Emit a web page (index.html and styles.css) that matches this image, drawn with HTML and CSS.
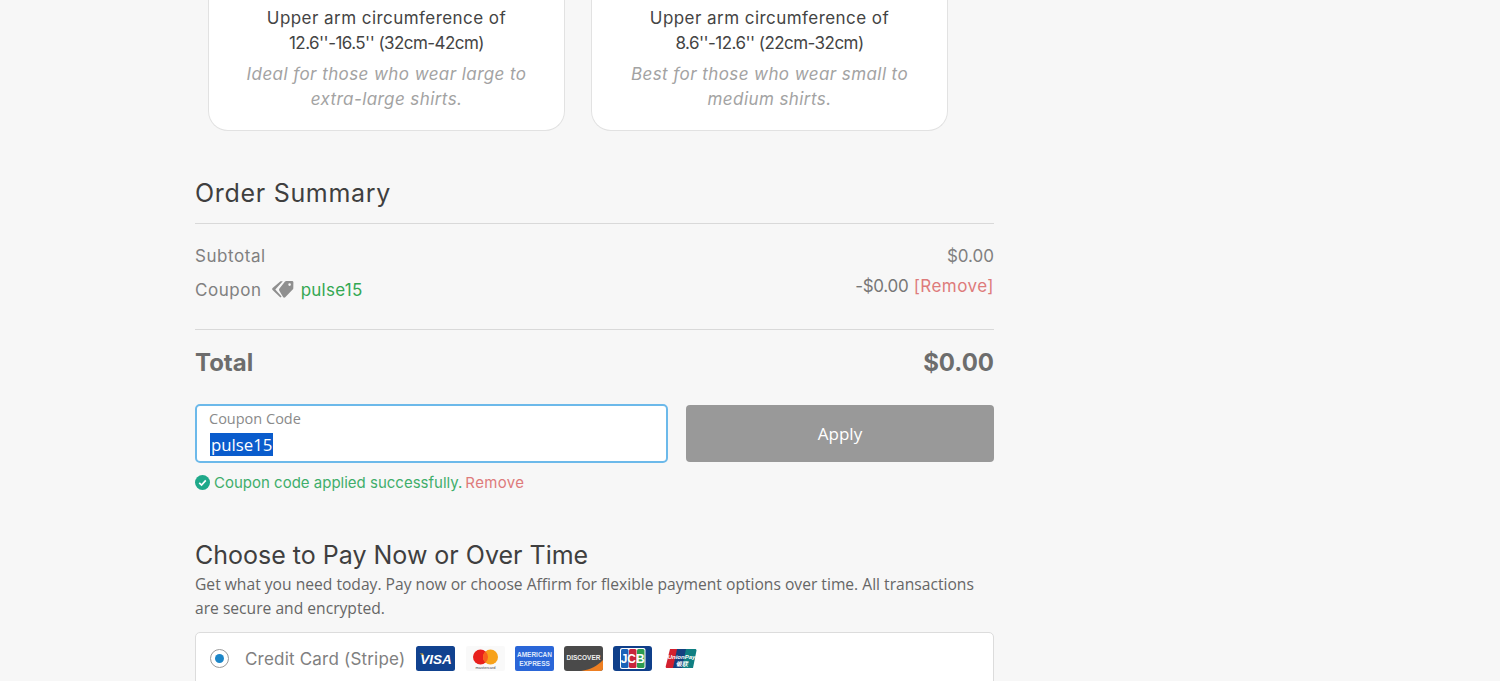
FILE: index.html
```html
<!DOCTYPE html>
<html lang="en">
<head>
<meta charset="utf-8">
<title>Checkout</title>
<link rel="stylesheet" href="styles.css">
</head>
<body>
<main class="page">
  <section class="sizes">
    <article class="size-card">
      <p class="size-main">Upper arm circumference of<br><span class="size-range">12.6''-16.5'' (32cm-42cm)</span></p>
      <p class="size-note">Ideal for those who wear large to<br>extra-large shirts.</p>
    </article>
    <article class="size-card">
      <p class="size-main">Upper arm circumference of<br><span class="size-range">8.6''-12.6'' (22cm-32cm)</span></p>
      <p class="size-note">Best for those who wear small to<br>medium shirts.</p>
    </article>
  </section>

  <section class="summary">
    <h2 class="heading summary-title">Order Summary</h2>
    <div class="lines">
      <div class="line">
        <span>Subtotal</span>
        <span class="amount">$0.00</span>
      </div>
      <div class="line line-coupon">
        <span class="coupon-left">Coupon
          <svg class="tag" viewBox="0 0 24 20" width="24" height="20" aria-hidden="true">
            <path fill="#8f8f8f" d="M9.5 9.6 15 2.6c.3-.4.7-.6 1.200-.6l5.800.1c.8 0 1.400.6 1.400 1.400l-.1 5.800c0 .5-.2.9-.6 1.200l-7.500 7.700c-.6.600-1.400.600-2 0L9.500 12c-.6-.7-.6-1.700 0-2.400zM19.600 4.300a1.300 1.300 0 1 0 0 2.600 1.300 1.300 0 0 0 0-2.600z" fill-rule="evenodd"/>
            <path fill="#8f8f8f" d="M10.500 2.300h2.300L5.300 10.400l6.300 7-1.200 1.100-7.800-7.400c-.6-.6-.6-1.400 0-2z"/>
          </svg>
          <span class="code-name">pulse15</span>
        </span>
        <span class="coupon-right"><span class="discount">-$0.00</span> <span class="remove">[Remove]</span></span>
      </div>
    </div>
    <div class="line total">
      <span>Total</span>
      <span class="total-amount">$0.00</span>
    </div>
    <form class="coupon-form">
      <label class="field">
        <span class="field-label">Coupon Code</span>
        <span class="field-value"><span class="selected">pulse15</span></span>
      </label>
      <button class="apply" type="button">Apply</button>
    </form>
    <p class="notice">
      <svg class="check" viewBox="0 0 16 16" width="15" height="15" aria-hidden="true">
        <circle cx="8" cy="8" r="8" fill="#1fa98a"/>
        <path d="M4.500 8.300 7 10.700l4.500-5" fill="none" stroke="#fff" stroke-width="1.800"/>
      </svg>
      <span class="notice-ok">Coupon code applied successfully.</span>
      <span class="notice-remove">Remove</span>
    </p>
  </section>

  <section class="payment">
    <h2 class="heading pay-title">Choose to Pay Now or Over Time</h2>
    <p class="pay-copy">Get what you need today. Pay now or choose Affirm for flexible payment options over time. All transactions are secure and encrypted.</p>
    <div class="pay-option">
      <span class="radio"><span class="radio-dot"></span></span>
      <span class="pay-name">Credit Card (Stripe)</span>
      <span class="cards">
        <svg viewBox="0 0 39 25" width="39" height="25" aria-hidden="true">
          <rect width="39" height="25" rx="2.500" fill="#11428f"/>
          <path d="M3.500 7.500h3.500l1 2.500z" fill="#e0a92e"/>
          <text x="20" y="17.500" class="visa-text">VISA</text>
        </svg>
        <svg viewBox="0 0 39 25" width="39" height="25" aria-hidden="true">
          <rect width="39" height="25" rx="2" fill="#f9f9f9"/>
          <circle cx="14.500" cy="11" r="7.500" fill="#e8201c"/>
          <circle cx="24.500" cy="11" r="7.500" fill="#f7a21b"/>
          <path d="M19.500 5.400a7.500 7.500 0 0 1 0 11.200 7.500 7.500 0 0 1 0-11.200z" fill="#f9601e"/>
          <text x="19.500" y="23" class="mc-text">mastercard</text>
        </svg>
        <svg viewBox="0 0 39 25" width="39" height="25" aria-hidden="true">
          <rect width="39" height="25" rx="2" fill="#2a66d8"/>
          <text x="19.500" y="10.500" class="amex-text">AMERICAN</text>
          <text x="19.500" y="20" class="amex-text">EXPRESS</text>
        </svg>
        <svg viewBox="0 0 39 25" width="39" height="25" aria-hidden="true">
          <rect width="39" height="25" rx="3" fill="#4a4a4a"/>
          <path d="M39 14v8a3 3 0 0 1-3 3H17c10-1.500 16-5 22-11z" fill="#ee7f22"/>
          <text x="19.500" y="13.500" class="disc-text">DISCOVER</text>
        </svg>
        <svg viewBox="0 0 39 25" width="39" height="25" aria-hidden="true">
          <rect width="39" height="25" rx="3" fill="#0f3f8a"/>
          <rect x="7" y="2" width="25.500" height="21" rx="2" fill="#fff"/>
          <rect x="8" y="3" width="7.500" height="19" rx="1.500" fill="#1a62b8"/>
          <rect x="16" y="3" width="7.500" height="19" rx="1.500" fill="#c8243c"/>
          <rect x="24" y="3" width="7.500" height="19" rx="1.500" fill="#2c9a50"/>
          <text x="19.700" y="16.500" class="jcb-text">JCB</text>
        </svg>
        <svg viewBox="0 0 39 25" width="39" height="25" aria-hidden="true">
          <path d="M8 3h10l-4 19H5c-1 0-1.500-.6-1.300-1.500z" fill="#d3202f"/>
          <path d="M15 3h10l-4 19H11z" fill="#15407f"/>
          <path d="M24 3h9c1 0 1.700.6 1.500 1.500L31 22H20z" fill="#0f7f82"/>
          <text x="19.500" y="13" class="up-text">UnionPay</text>
          <text x="20" y="19.500" class="up-text">银联</text>
        </svg>
      </span>
    </div>
  </section>
</main>
</body>
</html>
```
FILE: styles.css
```css
* { box-sizing: border-box; }
html, body {
  margin: 0;
  height: 681px;
  overflow: hidden;
  background: #f7f7f7;
}
body {
  font-family: Inter, "Liberation Sans", sans-serif;
  color: #808080;
}
p, h2 { margin: 0; }
.page {
  width: 799px;
  margin-left: 195px;
}
.sizes {
  display: flex;
  gap: 26px;
  padding: 0 45px 0 13px;
}
.size-card {
  width: 357px;
  height: 131px;
  padding-top: 6px;
  background: #fff;
  border: 1px solid #e2e2e2;
  border-top: 0;
  border-radius: 0 0 20px 20px;
  text-align: center;
}
.size-main {
  font-size: 17px;
  line-height: 25px;
  color: #444;
  letter-spacing: .45px;
}
.size-range { letter-spacing: -.55px; }
.size-note {
  margin-top: 6px;
  font-size: 17px;
  line-height: 25px;
  font-style: italic;
  color: #a3a3a3;
  letter-spacing: .42px;
}
.heading {
  font-size: 25px;
  font-weight: 400;
  line-height: 30px;
  color: #3f3f3f;
}
.summary { padding-top: 47px; }
.summary-title {
  padding-bottom: 15px;
  letter-spacing: .7px;
  border-bottom: 1px solid #d9d9d9;
}
.lines {
  padding: 20px 0 24px;
  border-bottom: 1px solid #d9d9d9;
}
.line {
  display: flex;
  justify-content: space-between;
  font-size: 17px;
  line-height: 24px;
  letter-spacing: .55px;
}
.amount { letter-spacing: 0; }
.line-coupon { margin-top: 7px; height: 30px; }
.coupon-left {
  display: flex;
  align-items: center;
  height: 30px;
}
.tag { margin: 0 7px 0 8px; position: relative; top: -1px; }
.code-name { color: #34a853; letter-spacing: .25px; }
.coupon-right { margin-top: -1px; }
.discount { letter-spacing: -.3px; color: #777; }
.remove { color: #de7b7b; letter-spacing: .45px; }
.total {
  padding-top: 18px;
  font-size: 24px;
  line-height: 30px;
  font-weight: 700;
  color: #6d6d6d;
  letter-spacing: 0;
}
.coupon-form {
  display: grid;
  grid-template-columns: 473px 308px;
  gap: 18px;
  align-items: center;
  margin-top: 26px;
}
.field {
  display: block;
  height: 59px;
  padding: 4px 13px;
  background: #fff;
  border: 2px solid #6cb9ea;
  border-radius: 5px;
}
.field-label {
  display: block;
  margin-left: -1px;
  font-size: 14.500px;
  line-height: 18px;
  color: #8a8a8a;
  font-family: "Open Sans", sans-serif;
}
.field-value {
  display: block;
  margin-top: 6px;
  font-family: "Open Sans", sans-serif;
  font-size: 16.800px;
  line-height: 22px;
  color: #fff;
}
.selected { background: #0a5ccc; padding: 0 1px; }
.apply {
  height: 57px;
  padding: 0;
  border: 0;
  border-radius: 4px;
  background: #999;
  color: #fff;
  font-family: "Open Sans", sans-serif;
  font-size: 17px;
}
.notice {
  display: flex;
  align-items: center;
  margin-top: 10px;
  font-size: 15px;
  line-height: 20px;
}
.check { margin-right: 4px; position: relative; top: -1px; }
.notice-ok { color: #3fae6b; }
.notice-remove { margin-left: 3px; color: #de7b7b; letter-spacing: .35px; }
.payment { padding-top: 47px; }
.pay-copy {
  font-family: "Open Sans", sans-serif;
  font-size: 15.640px;
  line-height: 24px;
  color: #666;
  margin-top: 2px;
}
.pay-option {
  display: flex;
  align-items: center;
  height: 60px;
  margin-top: 12px;
  padding-left: 14px;
  padding-bottom: 7px;
  background: #fff;
  border: 1px solid #dcdcdc;
  border-radius: 5px;
}
.radio {
  display: flex;
  align-items: center;
  justify-content: center;
  width: 19px;
  height: 19px;
  border: 1px solid #9a9a9a;
  border-radius: 50%;
}
.radio-dot {
  width: 9px;
  height: 9px;
  border-radius: 50%;
  background: #1c86c8;
}
.pay-name {
  margin-left: 16px;
  font-size: 17px;
  letter-spacing: .2px;
  color: #808080;
}
.cards {
  display: flex;
  gap: 10.200px;
  margin-left: 11px;
}
.cards text { text-anchor: middle; font-family: "Liberation Sans", sans-serif; }
.visa-text { font-size: 13.500px; font-weight: 700; font-style: italic; fill: #fff; }
.mc-text { font-size: 4px; fill: #444; }
.amex-text { font-size: 6.500px; font-weight: 700; fill: #dfe8fb; }
.disc-text { font-size: 6.500px; font-weight: 700; fill: #eee; }
.jcb-text { font-size: 12px; font-weight: 700; fill: #fff; }
.up-text { font-size: 6px; font-weight: 700; font-style: italic; fill: #fff; font-family: "Liberation Sans", "Noto Sans CJK SC", sans-serif; }
```
